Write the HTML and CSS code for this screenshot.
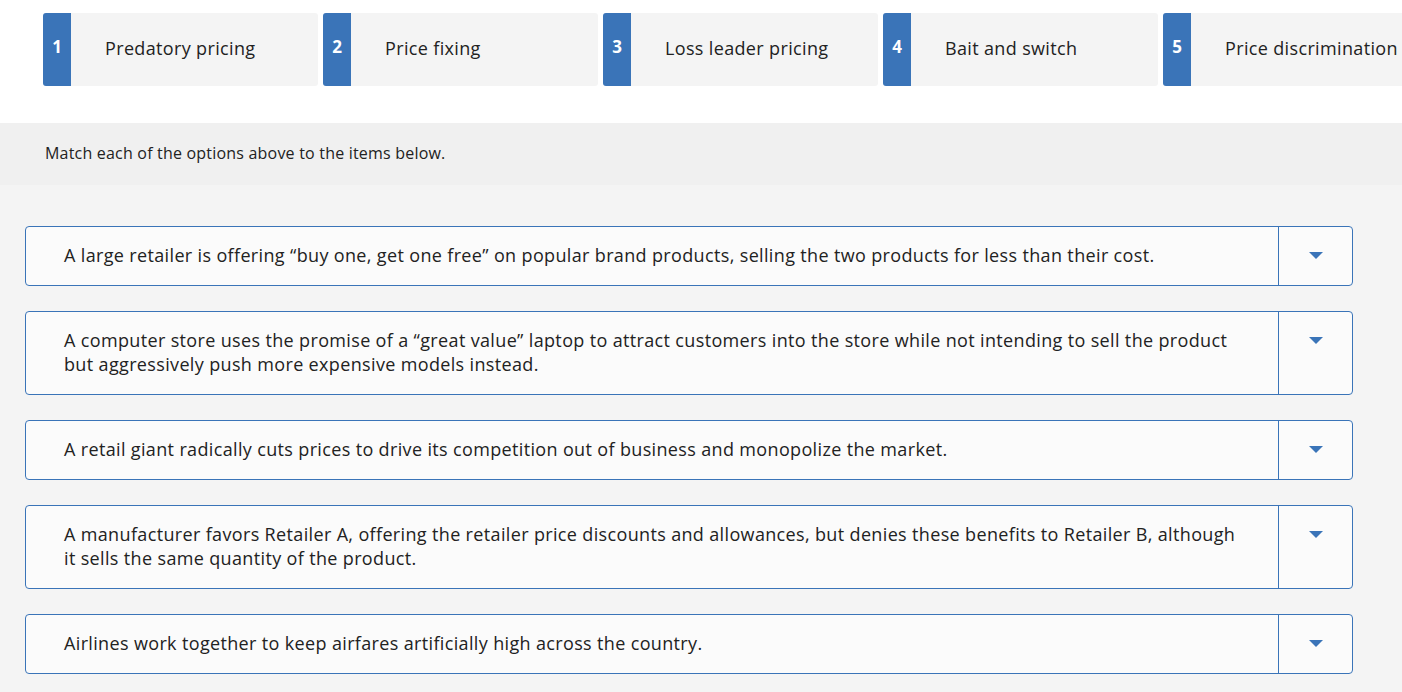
FILE: index.html
```html
<!DOCTYPE html>
<html lang="en">
<head>
	<meta charset="UTF-8">
	<title>matching</title>
	<link rel="stylesheet" href="styles.css">
</head>
<body>
	<div class="choices">
		<div class="choice"><span class="num">1</span><span class="label">Predatory pricing</span></div>
		<div class="choice"><span class="num">2</span><span class="label">Price fixing</span></div>
		<div class="choice"><span class="num">3</span><span class="label">Loss leader pricing</span></div>
		<div class="choice"><span class="num">4</span><span class="label">Bait and switch</span></div>
		<div class="choice"><span class="num">5</span><span class="label">Price discrimination</span></div>
	</div>
	<div class="prompt">Match each of the options above to the items below.</div>
	<div class="items">
		<div class="item">
			<div class="text">A large retailer is offering “buy one, get one free” on popular brand products, selling the two products for less than their cost.</div>
			<div class="drop"><span class="caret"></span></div>
		</div>
		<div class="item">
			<div class="text">A computer store uses the promise of a “great value” laptop to attract customers into the store while not intending to sell the product but aggressively push more expensive models instead.</div>
			<div class="drop"><span class="caret"></span></div>
		</div>
		<div class="item">
			<div class="text">A retail giant radically cuts prices to drive its competition out of business and monopolize the market.</div>
			<div class="drop"><span class="caret"></span></div>
		</div>
		<div class="item">
			<div class="text">A manufacturer favors Retailer A, offering the retailer price discounts and allowances, but denies these benefits to Retailer B, although it sells the same quantity of the product.</div>
			<div class="drop"><span class="caret"></span></div>
		</div>
		<div class="item">
			<div class="text">Airlines work together to keep airfares artificially high across the country.</div>
			<div class="drop"><span class="caret"></span></div>
		</div>
	</div>
</body>
</html>
```

FILE: styles.css
```css
html,body{
	margin: 0;
	padding: 0;
	background: #fff;
	overflow: hidden;
}
body{
	width: 1402px;
	height: 692px;
	font-family: "Open Sans", "Liberation Sans", sans-serif;
	color: #222;
}
.choices{
	display: flex;
	gap: 5px;
	padding: 13px 0 0 43px;
	height: 73px;
}
.choice{
	flex: 0 0 275px;
	display: flex;
	align-items: center;
	background: #f4f4f4;
	border-radius: 3px;
	overflow: hidden;
}
.num{
	flex: 0 0 28px;
	align-self: stretch;
	display: flex;
	align-items: center;
	justify-content: center;
	padding-bottom: 6px;
	box-sizing: border-box;
	background: #3a74b8;
	color: #fff;
	font-weight: bold;
	font-size: 17px;
}
.label{
	padding: 0 0 3px 34px;
	font-size: 18px;
	letter-spacing: 0.35px;
	white-space: nowrap;
}
.prompt{
	margin-top: 37px;
	height: 62px;
	box-sizing: border-box;
	padding: 19px 0 0 45px;
	background: #f0f0f0;
	font-size: 16px;
	letter-spacing: 0.2px;
}
.items{
	background: #f4f4f4;
	padding: 41px 49px 30px 25px;
	display: flex;
	flex-direction: column;
	gap: 25px;
}
.item{
	display: flex;
	border: 1px solid #3a74b8;
	border-radius: 4px;
	background: #fbfbfb;
	min-height: 58px;
}
.text{
	flex: 1;
	padding: 16px 40px 18px 38px;
	font-size: 18px;
	line-height: 24px;
	letter-spacing: 0.35px;
	align-self: center;
}
.drop{
	flex: 0 0 74px;
	border-left: 1px solid #3a74b8;
	display: flex;
	justify-content: center;
	padding-top: 25px;
	box-sizing: border-box;
}
.caret{
	width: 0;
	height: 0;
	border-left: 7px solid transparent;
	border-right: 7px solid transparent;
	border-top: 7px solid #3a74b8;
}
```
